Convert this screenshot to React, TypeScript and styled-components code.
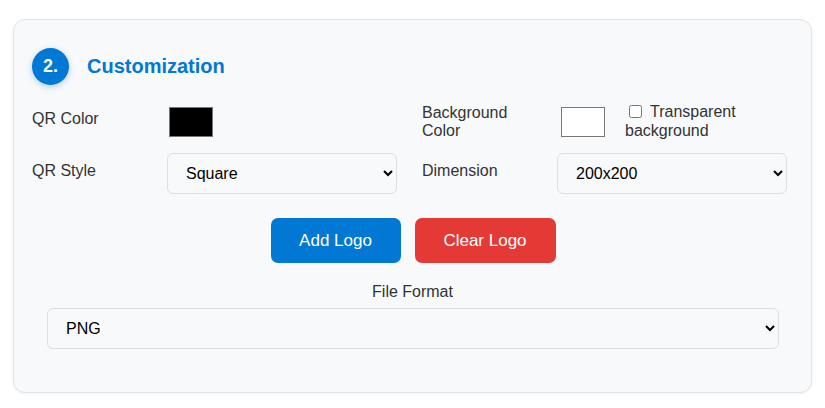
import React from "react";
import styled, { createGlobalStyle } from "styled-components";

const Global = createGlobalStyle`
  html, body { margin: 0; padding: 0; background: #ffffff; }
  body { font-family: "Liberation Sans", Arial, sans-serif; color: #333; }
  * { box-sizing: border-box; }
`;

const Page = styled.div`
  padding: 19px 13px 14px 13px;
`;

const Card = styled.section`
  width: 799px;
  background: #f8f9fb;
  border: 1px solid #e1e3e6;
  border-radius: 12px;
  box-shadow: 0 1px 3px rgba(0, 0, 0, 0.06);
  padding: 28px 18px 43px 18px;
`;

const Header = styled.div`
  display: flex;
  align-items: center;
  gap: 18px;
  margin-bottom: 17px;
`;

const StepBadge = styled.div`
  width: 37px;
  height: 37px;
  border-radius: 50%;
  background: #0078d4;
  color: #fff;
  font-weight: 700;
  font-size: 18px;
  display: flex;
  align-items: center;
  justify-content: center;
  box-shadow: 0 2px 6px rgba(0, 120, 212, 0.3);
`;

const Title = styled.h2`
  margin: 0;
  font-size: 20px;
  font-weight: 700;
  color: #0078d4;
`;

const Row = styled.div<{ $mb: number }>`
  display: grid;
  grid-template-columns: 365px 365px;
  column-gap: 25px;
  margin-bottom: ${(p) => p.$mb}px;
`;

const Group = styled.div`
  display: flex;
  align-items: center;
`;

const Label = styled.label<{ $mb?: number }>`
  width: 120px;
  margin-right: 15px;
  font-size: 16px;
  line-height: 18px;
  margin-bottom: ${(p) => (p.$mb ?? 6)}px;
  color: #333;
`;

const Swatch = styled.div<{ $color: string; $ml?: number }>`
  width: 44px;
  height: 30px;
  margin-left: ${(p) => (p.$ml ?? 2)}px;
  background: ${(p) => p.$color};
  border: 1px solid #767676;
`;

const CheckLabel = styled.label`
  width: 160px;
  margin-left: 20px;
  font-size: 16px;
  line-height: 19px;
  color: #333;
  margin-bottom: 2px;
`;

const Check = styled.input`
  width: 13px;
  height: 13px;
  margin: 0 8px 0 4px;
  vertical-align: -1px;
`;

const Select = styled.select`
  width: 230px;
  height: 41px;
  padding: 0 10px 0 14px;
  font-family: "Liberation Sans", Arial, sans-serif;
  font-size: 16px;
  color: #000;
  background: #f8f9fb;
  border: 1px solid #dcdee2;
  border-radius: 6px;
  outline: none;
`;

const WideSelect = styled(Select)`
  width: 732px;
  margin: 0 14px 0 15px;
  padding-left: 14px;
`;

const Buttons = styled.div`
  display: flex;
  justify-content: center;
  gap: 14px;
  margin-bottom: 19px;
  padding-left: 1px;
`;

const Button = styled.button<{ $variant: "primary" | "danger"; $w: number }>`
  width: ${(p) => p.$w}px;
  height: 45px;
  border: none;
  border-radius: 7px;
  color: #fff;
  font-family: "Liberation Sans", Arial, sans-serif;
  font-size: 17px;
  background: ${(p) => (p.$variant === "primary" ? "#0078d4" : "#e53935")};
  cursor: pointer;
`;

const FormatBlock = styled.div`
  display: flex;
  flex-direction: column;
  align-items: center;
  gap: 7px;
`;

const CenterLabel = styled.div`
  font-size: 16px;
  line-height: 18px;
  color: #333;
  margin-top: 1px;
`;

export default function App() {
  return (
    <>
      <Global />
      <Page>
        <Card>
          <Header>
            <StepBadge>2.</StepBadge>
            <Title>Customization</Title>
          </Header>
          <Row $mb={11}>
            <Group>
              <Label>QR Color</Label>
              <Swatch $color="#000000" />
            </Group>
            <Group>
              <Label $mb={0}>Background Color</Label>
              <Swatch $color="#ffffff" $ml={4} />
              <CheckLabel>
                <Check type="checkbox" />
                Transparent background
              </CheckLabel>
            </Group>
          </Row>
          <Row $mb={24}>
            <Group>
              <Label>QR Style</Label>
              <Select defaultValue="square">
                <option value="square">Square</option>
                <option value="dots">Dots</option>
                <option value="rounded">Rounded</option>
              </Select>
            </Group>
            <Group>
              <Label>Dimension</Label>
              <Select defaultValue="200">
                <option value="200">200x200</option>
                <option value="300">300x300</option>
                <option value="400">400x400</option>
              </Select>
            </Group>
          </Row>
          <Buttons>
            <Button $variant="primary" $w={130}>Add Logo</Button>
            <Button $variant="danger" $w={141}>Clear Logo</Button>
          </Buttons>
          <FormatBlock>
            <CenterLabel>File Format</CenterLabel>
            <WideSelect defaultValue="png">
              <option value="png">PNG</option>
              <option value="jpg">JPG</option>
              <option value="svg">SVG</option>
            </WideSelect>
          </FormatBlock>
        </Card>
      </Page>
    </>
  );
}
